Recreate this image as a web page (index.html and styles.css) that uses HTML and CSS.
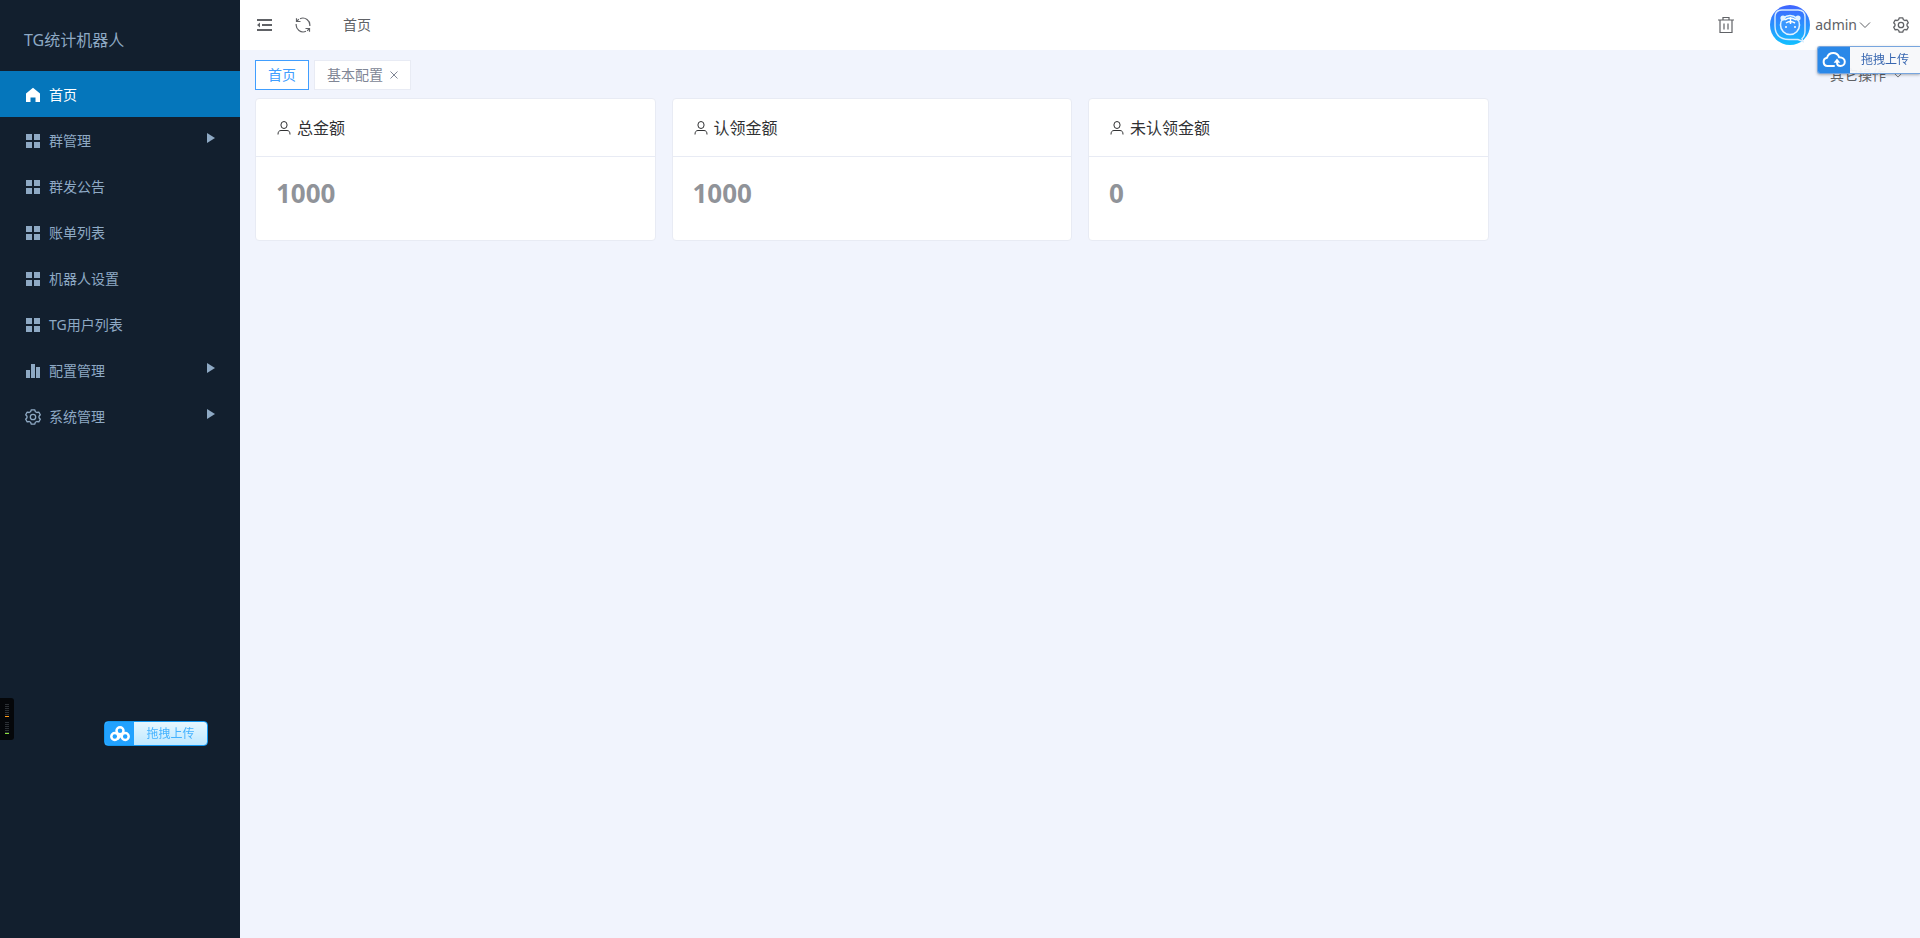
FILE: index.html
```html
<!DOCTYPE html>
<html lang="zh-CN">
<head>
    <meta charset="UTF-8">
    <meta name="viewport" content="width=device-width, initial-scale=1.0">
    <title>TG统计机器人</title>
    <link rel="stylesheet" href="styles.css">
</head>
<body>
    <!-- shared icons -->
    <svg class="symbols" aria-hidden="true">
        <symbol id="icon-grid" viewBox="0 0 16 16">
            <path fill="currentColor" d="M1 1h6v6H1zM9 1h6v6H9zM1 9h6v6H1zM9 9h6v6H9z"/>
        </symbol>
        <symbol id="icon-user" viewBox="0 0 14 14">
            <g fill="none" stroke="currentColor">
                <ellipse cx="7" cy="4" rx="3.1" ry="3.5"/>
                <path d="M1 13.500c0-2.700 1-4 3-4h6c2 0 3 1.300 3 4"/>
            </g>
        </symbol>
        <symbol id="icon-gear" viewBox="0 0 16 16">
            <g fill="none" stroke="currentColor" stroke-width="1.300" stroke-linejoin="round">
                <path d="M6.300 .8h3.400l.7 1.900 1.400.8 2-.4 1.500 2.700-1.300 1.400v1.600l1.300 1.400-1.500 2.700-2-.4-1.400.8-.7 1.900H6.300l-.7-1.900-1.400-.8-2 .4L.7 10.200 2 8.800V7.200L.7 5.800l1.500-2.700 2 .4 1.400-.8z"/>
                <circle cx="8" cy="8" r="2.700"/>
            </g>
        </symbol>
        <symbol id="icon-down" viewBox="0 0 12 12">
            <path fill="none" stroke="currentColor" d="M1 3.500l5 5 5-5"/>
        </symbol>
    </svg>

    <div class="layout">
        <aside class="sidebar">
            <h1 class="logo">TG统计机器人</h1>
            <nav>
                <ul class="menu">
                    <li><a href="#" class="menu-item active">
                        <svg class="icon" viewBox="0 0 16 16"><path fill="currentColor" d="M8 .8l7 5.700V15h-4.500v-4.500h-5V15H1V6.500z"/></svg>
                        <span>首页</span></a></li>
                    <li><a href="#" class="menu-item has-sub"><svg class="icon"><use href="#icon-grid"/></svg><span>群管理</span></a></li>
                    <li><a href="#" class="menu-item"><svg class="icon"><use href="#icon-grid"/></svg><span>群发公告</span></a></li>
                    <li><a href="#" class="menu-item"><svg class="icon"><use href="#icon-grid"/></svg><span>账单列表</span></a></li>
                    <li><a href="#" class="menu-item"><svg class="icon"><use href="#icon-grid"/></svg><span>机器人设置</span></a></li>
                    <li><a href="#" class="menu-item"><svg class="icon"><use href="#icon-grid"/></svg><span>TG用户列表</span></a></li>
                    <li><a href="#" class="menu-item has-sub">
                        <svg class="icon" viewBox="0 0 16 16"><path fill="currentColor" d="M1 7h4v8H1zM6 1h4v14H6zM11 4h4v11h-4z"/></svg>
                        <span>配置管理</span></a></li>
                    <li><a href="#" class="menu-item has-sub"><svg class="icon"><use href="#icon-gear"/></svg><span>系统管理</span></a></li>
                </ul>
            </nav>
        </aside>

        <div class="main">
            <header class="topbar">
                <button class="icon-btn" aria-label="收起菜单">
                    <svg class="icon" viewBox="0 0 16 16"><path fill="currentColor" d="M1 2h15v2H1zM6 7h10v2H6zM1 12h15v2H1zM1 8l3-2.500v5z"/></svg>
                </button>
                <button class="icon-btn" aria-label="刷新">
                    <svg class="icon" viewBox="0 0 16 16">
                        <g fill="none" stroke="currentColor" stroke-width="1.200">
                            <path d="M5 1.700a7 7 0 0 1 9.800 7.300M11 14.300A7 7 0 0 1 1.200 7"/>
                            <path d="M1.500 1.200v3.300h4M1.800 4.300l2-2.200M14.500 14.800v-3.300h-4M14.200 11.700l-2 2.200"/>
                        </g>
                    </svg>
                </button>
                <a href="#" class="crumb">首页</a>
                <div class="topbar-right">
                    <button class="icon-btn trash" aria-label="清除缓存">
                        <svg class="icon-lg" viewBox="0 0 18 18">
                            <path fill="none" stroke="currentColor" stroke-width="1.200" d="M1 4h16M6 4V1.500h6V4M3 4v12.500h12V4M7 7.500v6M11 7.500v6"/>
                        </svg>
                    </button>
                    <button class="user">
                        <svg class="avatar" viewBox="0 0 40 40">
                            <defs>
                                <linearGradient id="avatarFill" x1="0" y1="0" x2="0" y2="1">
                                    <stop offset="0" stop-color="#4164ff"/>
                                    <stop offset="1" stop-color="#12c0ff"/>
                                </linearGradient>
                            </defs>
                            <circle cx="20" cy="20" r="20" fill="url(#avatarFill)"/>
                            <path fill="none" stroke="#d5ecff" stroke-width="1.400" d="M12 5h16q7 0 7 7v14q0 5-3 7.500l1 3-5-2H19Q5 34 5 21v-9q0-7 7-7z"/>
                            <circle cx="20" cy="20" r="9.500" fill="#3b98ff" stroke="#e2f3ff" stroke-width="1.600"/>
                            <circle cx="13" cy="13" r="2.600" fill="#e2f3ff"/>
                            <circle cx="28" cy="13" r="2.600" fill="#e2f3ff"/>
                            <path fill="none" stroke="#fff" stroke-width="1.500" d="M15 15q5-4 11 0M16 18q4-3 9 0M20.500 12v7"/>
                            <circle cx="16" cy="22" r="1" fill="#fff"/>
                            <circle cx="25" cy="22" r="1" fill="#fff"/>
                        </svg>
                        <span>admin</span>
                        <svg class="icon-sm"><use href="#icon-down"/></svg>
                    </button>
                    <button class="icon-btn setting" aria-label="设置"><svg class="icon"><use href="#icon-gear"/></svg></button>
                </div>
            </header>

            <div class="tabs">
                <a href="#" class="tab active">首页</a>
                <div class="tab">
                    <a href="#">基本配置</a>
                    <button class="tab-close" aria-label="关闭">
                        <svg viewBox="0 0 8 8"><path fill="none" stroke="currentColor" d="M.5 .5l7 7M7.500 .5l-7 7"/></svg>
                    </button>
                </div>
                <button class="more">其它操作 <svg class="icon-xs"><use href="#icon-down"/></svg></button>
            </div>

            <main class="cards">
                <section class="card">
                    <h2 class="card-header"><svg><use href="#icon-user"/></svg>总金额</h2>
                    <p class="card-body">1000</p>
                </section>
                <section class="card">
                    <h2 class="card-header"><svg><use href="#icon-user"/></svg>认领金额</h2>
                    <p class="card-body">1000</p>
                </section>
                <section class="card">
                    <h2 class="card-header"><svg><use href="#icon-user"/></svg>未认领金额</h2>
                    <p class="card-body">0</p>
                </section>
            </main>
        </div>
    </div>

    <!-- floating widgets -->
    <button class="upload upload-top">
        <span class="upload-icon">
            <svg viewBox="0 0 24 16">
                <path fill="none" stroke="#fff" stroke-width="2" stroke-linecap="round" d="M12 14H5.500a4.200 4.200 0 0 1-.5-8.300C6 2.500 8.500 1 11.300 1c3 0 5 1.700 5.900 4.300 3.300 0 5.600 1.900 5.600 4.500 0 2.500-1.900 4.200-4.300 4.200-2.500 0-3.500-1.500-3.500-3.500"/>
                <path fill="#fff" d="M15 6.500l3.300 4.200h-6.600z"/>
            </svg>
        </span>
        <span class="upload-text">拖拽上传</span>
    </button>
    <button class="upload upload-side">
        <span class="upload-icon">
            <svg viewBox="0 0 20 16">
                <g fill="none" stroke="#fff" stroke-width="2.500">
                    <circle cx="10" cy="4.800" r="3.500"/>
                    <circle cx="4.800" cy="10.500" r="3.500"/>
                    <circle cx="15.200" cy="10.500" r="3.500"/>
                    <path d="M7.300 13l5-5"/>
                </g>
            </svg>
        </span>
        <span class="upload-text">拖拽上传</span>
    </button>
    <div class="meter">
        <i class="meter-bar orange"></i>
        <i class="meter-bar green"></i>
    </div>
</body>
</html>
```
FILE: styles.css
```css
* {
    box-sizing: border-box;
}
body {
    margin: 0;
    font-family: "Noto Sans", "Noto Sans CJK SC", sans-serif;
    font-size: 14px;
    line-height: 20px;
    color: #606266;
    background: #f1f4fd;
}
a {
    color: inherit;
    text-decoration: none;
}
button {
    border: none;
    background: none;
    padding: 0;
    font: inherit;
    color: inherit;
    cursor: pointer;
}
svg {
    display: block;
    flex: none;
}
.symbols {
    position: absolute;
    width: 0;
    height: 0;
}
.icon {
    width: 16px;
    height: 16px;
}
.icon-lg {
    width: 18px;
    height: 18px;
}
.icon-sm {
    width: 12px;
    height: 12px;
}
.icon-xs {
    width: 10px;
    height: 10px;
}
.layout {
    display: flex;
    min-height: 100vh;
}

/* sidebar */
.sidebar {
    flex: none;
    width: 240px;
    background: #121f2e;
    color: #8ea9c4;
}
.logo {
    margin: 0;
    padding: 30px 24px 21px;
    font-size: 16px;
    line-height: 20px;
    font-weight: normal;
}
.menu {
    list-style: none;
    margin: 0;
    padding: 0;
}
.menu-item {
    display: flex;
    align-items: center;
    gap: 8px;
    height: 46px;
    padding: 2px 25px 0;
}
.menu-item.active {
    background: #0576bb;
    color: #fff;
}
.has-sub::after {
    content: "";
    margin: 0 0 6px auto;
    border: 5px solid transparent;
    border-left: 8px solid #8ea9c4;
    border-right: none;
}

/* top bar */
.main {
    flex: 1;
    min-width: 0;
}
.topbar {
    display: flex;
    align-items: center;
    height: 50px;
    padding-left: 16px;
    background: #fff;
}
.icon-btn {
    margin-right: 23px;
}
.crumb {
    margin-left: 9px;
}
.topbar-right {
    display: flex;
    align-items: center;
    margin-left: auto;
}
.trash {
    margin-right: 35px;
}
.user {
    display: flex;
    align-items: center;
    margin-right: 22px;
}
.avatar {
    width: 40px;
    height: 40px;
    margin-right: 5px;
}
.user .icon-sm {
    margin-left: 2px;
}
.setting {
    margin-right: 11px;
}

/* tabs */
.tabs {
    display: flex;
    gap: 5px;
    padding: 10px 15px 8px;
}
.tab {
    display: flex;
    align-items: center;
    gap: 7px;
    height: 30px;
    padding: 0 12px;
    border: 1px solid #e8ebf4;
    background: #fff;
    color: #808695;
}
.tab.active {
    border-color: #409eff;
    color: #409eff;
}
.tab-close svg {
    width: 8px;
    height: 8px;
}
.more {
    display: flex;
    align-items: center;
    gap: 7px;
    height: 30px;
    margin-left: auto;
    padding-right: 2px;
}

/* cards */
.cards {
    display: grid;
    grid-template-columns: repeat(4, 1fr);
    gap: 16px;
    padding: 0 15px;
}
.card {
    border: 1px solid #e8ebf4;
    border-radius: 4px;
    background: #fff;
}
.card-header {
    display: flex;
    align-items: center;
    gap: 6px;
    height: 58px;
    margin: 0;
    padding: 0 21px;
    border-bottom: 1px solid #e8ebf4;
    font-size: 16px;
    font-weight: normal;
    color: #303133;
}
.card-header svg {
    width: 14px;
    height: 14px;
}
.card-body {
    margin: 0;
    padding: 20px 20px 31px;
    font-size: 26px;
    line-height: 32px;
    font-weight: bold;
    color: #909399;
}

/* floating widgets */
.upload {
    position: fixed;
    display: flex;
    overflow: hidden;
    font-size: 12px;
}
.upload-icon {
    display: flex;
    align-items: center;
    justify-content: center;
}
.upload-text {
    flex: 1;
    display: flex;
    align-items: center;
    justify-content: center;
}
.upload-top {
    top: 46px;
    right: 0;
    width: 103px;
    height: 28px;
    border: 1px solid #77a5de;
    border-right: none;
    border-radius: 3px 0 0 3px;
    box-shadow: 0 1px 3px rgba(0, 0, 0, 0.3);
    background: rgba(247, 248, 250, 0.95);
    color: #3766b0;
}
.upload-top .upload-icon {
    width: 32px;
    background: #2a88e8;
}
.upload-top .upload-icon svg {
    width: 24px;
    height: 16px;
}
.upload-side {
    left: 104px;
    bottom: 192px;
    width: 104px;
    height: 25px;
    border: 1px solid #1296f0;
    border-radius: 4px;
    background: linear-gradient(#e6f7ff, #bfe8ff);
    color: #45b2ff;
}
.upload-side .upload-icon {
    width: 29px;
    background: #22a2ff;
}
.upload-side .upload-icon svg {
    width: 20px;
    height: 16px;
}
.meter {
    position: fixed;
    left: 0;
    bottom: 198px;
    display: flex;
    flex-direction: column;
    gap: 5px;
    width: 14px;
    height: 42px;
    padding: 6px 5px;
    border-radius: 0 3px 3px 0;
    background: #05070a;
}
.meter-bar {
    width: 4px;
    height: 13px;
    background: repeating-linear-gradient(#2c3035 0 1px, transparent 1px 2px);
    border-bottom: 1px solid;
}
.orange {
    color: #ff9c1a;
}
.green {
    color: #8be03c;
}
```
